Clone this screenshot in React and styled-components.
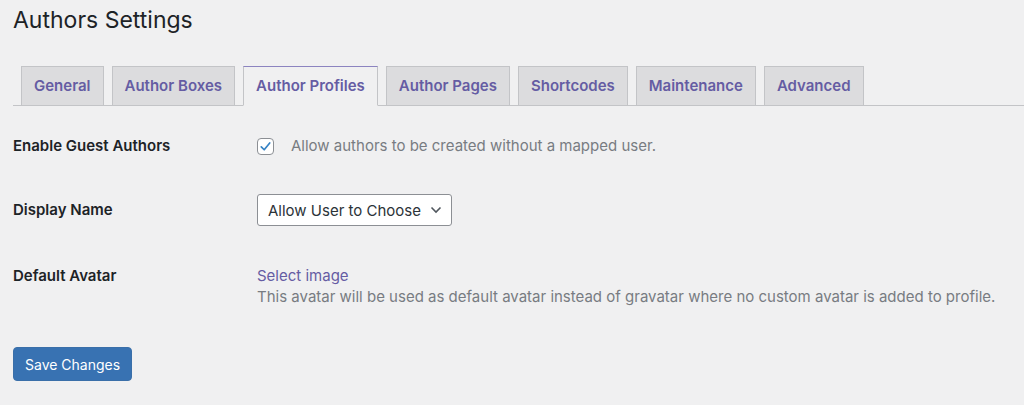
import React, { useState } from "react";
import styled, { createGlobalStyle } from "styled-components";

const GlobalStyle = createGlobalStyle`
  body {
    margin: 0;
    background: #f0f0f1;
    font-family: Inter, "Liberation Sans", Arial, sans-serif;
    color: #1d2327;
  }
`;

const Wrap = styled.div`
  padding: 6px 12px 0 13px;
`;

const Title = styled.h1`
  margin: 0;
  font-size: 23px;
  font-weight: 400;
  line-height: 29px;
  padding: 0;
  color: #1d2327;
`;

const TabBar = styled.nav`
  display: flex;
  gap: 8px;
  margin-top: 31px;
  padding-left: 8px;
  border-bottom: 1px solid #c3c4c7;
  margin-right: -12px;
`;

const Tab = styled.a`
  display: block;
  padding: 0 12px;
  height: 38px;
  line-height: 38px;
  font-size: 15px;
  font-weight: 600;
  color: #655ca3;
  text-decoration: none;
  background: ${(p) => (p.$active ? "#f0f0f1" : "#dcdcde")};
  border: 1px solid #c3c4c7;
  border-top-color: ${(p) => (p.$active ? "#8c84c0" : "#c3c4c7")};
  border-bottom: ${(p) => (p.$active ? "1px solid #f0f0f1" : "none")};
  margin-bottom: ${(p) => (p.$active ? "-1px" : "0")};
  cursor: pointer;
`;

const Form = styled.div`
  display: grid;
  grid-template-columns: 244px 1fr;
  margin-top: 20px;
`;

const Label = styled.div`
  font-size: 15px;
  line-height: 20px;
  font-weight: 600;
  color: #1d2327;
  padding-top: ${(p) => p.$pt || 0}px;
`;

const Field = styled.div`
  display: flex;
  flex-direction: ${(p) => (p.$column ? "column" : "row")};
  align-items: ${(p) => (p.$column ? "flex-start" : "center")};
  gap: ${(p) => (p.$column ? "1px" : "0")};
  padding-top: ${(p) => p.$pt || 0}px;
  padding-bottom: ${(p) => p.$pb || 0}px;
`;

const Check = styled.span`
  display: inline-flex;
  align-items: center;
  justify-content: center;
  width: 15px;
  height: 15px;
  border: 1px solid #8c8f94;
  border-radius: 4px;
  background: #fff;
  margin-right: 17px;
  cursor: pointer;
`;

const Hint = styled.span`
  font-size: 15px;
  line-height: 20px;
  color: #787c82;
`;

const Select = styled.div`
  display: flex;
  align-items: center;
  justify-content: space-between;
  width: 195px;
  height: 32px;
  box-sizing: border-box;
  padding: 0 9px 0 10px;
  background: #fff;
  border: 1px solid #8c8f94;
  border-radius: 3px;
  font-size: 15px;
  color: #2c3338;
`;

const LinkText = styled.a`
  font-size: 15px;
  line-height: 20px;
  color: #655ca3;
  text-decoration: none;
  cursor: pointer;
`;

const Button = styled.button`
  margin-top: 40px;
  height: 34px;
  padding: 0 11px;
  font-family: inherit;
  font-size: 14px;
  color: #fff;
  background: #3872b2;
  border: 1px solid #3a6fa9;
  border-radius: 4px;
  cursor: pointer;
`;

const tabs = [
  "General",
  "Author Boxes",
  "Author Profiles",
  "Author Pages",
  "Shortcodes",
  "Maintenance",
  "Advanced",
];

export default function App() {
  const [active, setActive] = useState("Author Profiles");
  const [guest, setGuest] = useState(true);

  return (
    <>
      <GlobalStyle />
      <Wrap>
        <Title>Authors Settings</Title>
        <TabBar>
          {tabs.map((t) => (
            <Tab key={t} $active={t === active} onClick={() => setActive(t)}>
              {t}
            </Tab>
          ))}
        </TabBar>
        <Form>
          <Label $pt={10}>Enable Guest Authors</Label>
          <Field $pt={10} $pb={38}>
            <Check onClick={() => setGuest(!guest)}>
              {guest && (
                <svg width="13" height="13" viewBox="0 0 20 20">
                  <path
                    d="M3.5 10.5 L8 15 L16.5 4.5"
                    fill="none"
                    stroke="#3582c4"
                    strokeWidth="2.6"
                    strokeLinecap="round"
                    strokeLinejoin="round"
                  />
                </svg>
              )}
            </Check>
            <Hint>Allow authors to be created without a mapped user.</Hint>
          </Field>
          <Label $pt={6}>Display Name</Label>
          <Field $pb={40}>
            <Select>
              <span>Allow User to Choose</span>
              <svg width="12" height="8" viewBox="0 0 12 8">
                <path
                  d="M1.5 1.5 L6 6 L10.5 1.5"
                  fill="none"
                  stroke="#50575e"
                  strokeWidth="1.6"
                />
              </svg>
            </Select>
          </Field>
          <Label>Default Avatar</Label>
          <Field $column>
            <LinkText>Select image</LinkText>
            <Hint>
              This avatar will be used as default avatar instead of gravatar
              where no custom avatar is added to profile.
            </Hint>
          </Field>
        </Form>
        <Button>Save Changes</Button>
      </Wrap>
    </>
  );
}
